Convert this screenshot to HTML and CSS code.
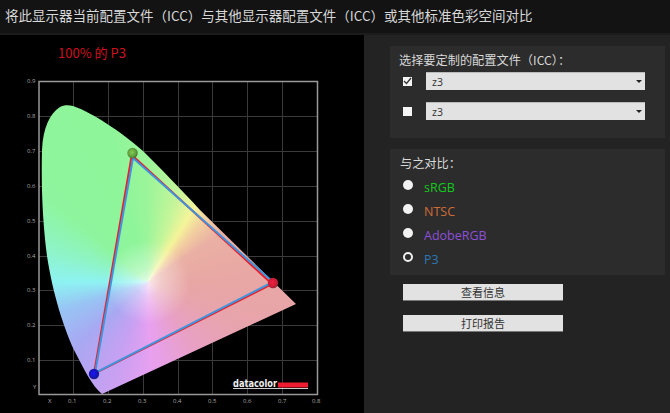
FILE: index.html
```html
<!DOCTYPE html>
<html lang="zh">
<head>
<meta charset="utf-8">
<title>ICC</title>
<link rel="stylesheet" href="styles.css">
</head>
<body>
<header class="top">将此显示器当前配置文件（ICC）与其他显示器配置文件（ICC）或其他标准色彩空间对比</header>
<main class="main">
  <section class="left">
    <div class="cover">100% 的 P3</div>
    <svg class="chart" width="364" height="378" viewBox="0 35 364 378" xmlns="http://www.w3.org/2000/svg">
      <defs>
        <clipPath id="gamut">
          <path d="M102 394 C92 386 84 369 74 350 C64 328 53 295 47 256 C43 225 41 190 42 150 C43 128 50 113 60 107 C64 105 68 105 73 106 C93 113 120 131 143 151 C160 168 180 188 200 210 L296 304 Z"/>
        </clipPath>
        <radialGradient id="ballG" cx="45%" cy="45%" r="60%"><stop offset="0" stop-color="#86cc50"/><stop offset=".7" stop-color="#5c9a3c"/><stop offset="1" stop-color="#3a5a30"/></radialGradient>
        <radialGradient id="ballR" cx="45%" cy="45%" r="60%"><stop offset="0" stop-color="#f02040"/><stop offset=".7" stop-color="#c81c34"/><stop offset="1" stop-color="#70303a"/></radialGradient>
        <radialGradient id="ballB" cx="45%" cy="45%" r="60%"><stop offset="0" stop-color="#1818f8"/><stop offset=".7" stop-color="#1414b0"/><stop offset="1" stop-color="#203070"/></radialGradient>
      </defs>
      <g class="grid">
        <path d="M73.500 81V395M108.500 81V395M143.500 81V395M178.500 81V395M212.500 81V395M247.500 81V395M282.500 81V395M39 116.500H317M39 151.500H317M39 186.500H317M39 221.500H317M39 256.500H317M39 290.500H317M39 325.500H317M39 360.500H317"/>
      </g>
      <rect class="frame" x="39" y="81.500" width="278.500" height="313"/>
      <g class="labels">
        <text x="27" y="83">0.9</text><text x="27" y="118">0.8</text><text x="27" y="153">0.7</text><text x="27" y="188">0.6</text><text x="27" y="223">0.5</text><text x="27" y="258">0.4</text><text x="27" y="292">0.3</text><text x="27" y="327">0.2</text><text x="27" y="362">0.1</text><text x="33" y="389">Y</text>
        <text x="48" y="403">X</text><text x="68" y="403">0.1</text><text x="103" y="403">0.2</text><text x="138" y="403">0.3</text><text x="173" y="403">0.4</text><text x="208" y="403">0.5</text><text x="243" y="403">0.6</text><text x="278" y="403">0.7</text><text x="312" y="403">0.8</text>
      </g>
      <g clip-path="url(#gamut)">
        <foreignObject x="0" y="60" width="364" height="353">
          <div class="spectrum" xmlns="http://www.w3.org/1999/xhtml"></div>
        </foreignObject>
      </g>
      <path class="line-red" d="M131.800 155 L272 284 L94 373.800 Z"/>
      <path class="line-blue" d="M133 158 L273 282 L95 373 Z"/>
      <circle cx="132.500" cy="153" r="5.200" fill="url(#ballG)"/>
      <circle cx="273" cy="283" r="5.200" fill="url(#ballR)"/>
      <circle cx="94" cy="374" r="5.200" fill="url(#ballB)"/>
      <text class="brand" x="233" y="387" textLength="44" lengthAdjust="spacingAndGlyphs">datacolor</text>
      <rect x="278" y="382.500" width="30" height="5" fill="#ee1c2e"/>
      <rect x="233" y="388" width="75" height="1" fill="#ccc"/>
    </svg>
  </section>
  <section class="right">
    <div class="panel panel-profile">
      <div class="panel-title">选择要定制的配置文件（ICC）：</div>
      <div class="profile-row">
        <span class="check">
          <svg width="9" height="8" viewBox="0 0 9 8"><path d="M1 4 L3.500 6.500 L8 1" fill="none" stroke="#333" stroke-width="1.300"/></svg>
        </span>
        <div class="select"><span>z3</span><i class="arrow"></i></div>
      </div>
      <div class="profile-row">
        <span class="check"></span>
        <div class="select"><span>z3</span><i class="arrow"></i></div>
      </div>
    </div>
    <div class="panel panel-compare">
      <div class="panel-title">与之对比：</div>
      <div class="radio-row"><span class="radio"></span><span class="c-srgb">sRGB</span></div>
      <div class="radio-row"><span class="radio"></span><span class="c-ntsc">NTSC</span></div>
      <div class="radio-row"><span class="radio"></span><span class="c-adobe">AdobeRGB</span></div>
      <div class="radio-row"><span class="radio on"></span><span class="c-p3">P3</span></div>
    </div>
    <div class="buttons">
      <div class="btn">查看信息</div>
      <div class="btn">打印报告</div>
    </div>
  </section>
</main>
</body>
</html>
```
FILE: styles.css
```css
* { box-sizing: border-box; }
html, body { margin: 0; height: 413px; overflow: hidden; background: #000; }
body {
  width: 670px;
  font-family: "Noto Sans CJK SC", "Open Sans", "Noto Sans", sans-serif;
  color: #ddd;
  display: flex;
  flex-direction: column;
}
.top {
  height: 35px;
  background: #131313;
  border-bottom: 2px solid #1c1c1c;
  padding: 4px 0 0 5px;
  font-size: 13.500px;
  line-height: 22px;
  color: #d8d8d8;
  white-space: nowrap;
}
.main { display: flex; flex: 1; min-height: 0; }
.left { width: 364px; background: #000; position: relative; }
.cover {
  position: absolute;
  left: 58px;
  top: 9px;
  font-size: 13px;
  line-height: 18px;
  color: #d0101c;
}
.chart { display: block; }
.grid path { stroke: #3a3a3a; stroke-width: 1; fill: none; }
.frame { fill: none; stroke: #999; stroke-width: 1.500; }
.labels text { font: 6px "Open Sans", sans-serif; fill: #aaa; }
.spectrum {
  width: 364px;
  height: 353px;
  background:
    radial-gradient(circle at 148px 222px, rgba(255,255,255,.75) 0, rgba(255,255,255,.4) 14px, rgba(255,255,255,0) 42px),
    conic-gradient(from 0deg at 148px 222px,
      #9cf59a 0deg, #c4f59a 18deg, #f4f49a 32deg, #f2d0a0 42deg, #eab0a4 56deg, #e8a6a4 90deg, #e8a4ac 115deg, #e8a0c4 145deg, #e8a0f0 178deg,
      #c8a0f2 200deg, #a8a8f2 228deg, #98c4f4 252deg, #8ef2f2 270deg, #8ef4c8 288deg, #8ef59e 310deg, #8ef59a 345deg, #9cf59a 360deg);
}
.line-red { fill: none; stroke: #e8202c; stroke-width: 2; }
.line-blue { fill: none; stroke: #3f94dc; stroke-width: 2; }
.brand { font: bold 10.500px "DejaVu Sans", sans-serif; fill: #eee; }
.right { flex: 1; background: #232323; padding: 11px 5px 0 26px; }
.panel { background: #2c2c2c; width: 275px; }
.panel-title { font-size: 12.200px; line-height: 16px; color: #d8d8d8; }
.panel-profile { height: 92px; padding: 6px 20px 0 9px; }
.profile-row { display: flex; align-items: center; height: 18px; margin-top: 12px; }
.panel-title + .profile-row { margin-top: 4px; }
.check {
  width: 9px; height: 9px; margin-left: 4px; margin-right: 14px;
  background: #f4f4f4; display: flex; align-items: center; justify-content: center;
  flex: none;
}
.select {
  width: 219px; height: 18px; background: #e2e2e2;
  border-top: 1px solid #bbb;
  display: flex; align-items: center; justify-content: space-between;
  padding: 0 3px 0 6px;
  font-size: 10.500px; color: #333;
  font-family: "Open Sans", sans-serif;
}
.arrow { width: 0; height: 0; border: 3px solid transparent; border-top: 3.500px solid #222; border-bottom: 0; }
.panel-compare { height: 126px; margin-top: 11px; padding: 6px 0 0 10px; }
.radio-row {
  display: flex; align-items: center; height: 24px;
  font-size: 12.500px; font-family: "Open Sans", sans-serif;
}
.panel-title + .radio-row { margin-top: 4px; }
.radio {
  width: 10px; height: 10px; border-radius: 50%; background: #f2f2f2;
  margin-left: 3px; margin-right: 11px; flex: none; position: relative; top: -2px;
}
.radio.on { background: #2c2c2c; border: 2px solid #eee; }
.c-srgb { color: #14c81c; }
.c-ntsc { color: #cc6c38; }
.c-adobe { color: #8c50d8; }
.c-p3 { color: #2a78b8; }
.buttons { display: flex; flex-direction: column; gap: 14px; margin: 9px 0 0 13px; }
.btn {
  width: 160px; height: 17px; background: #e2e2e2;
  border-bottom: 1px solid #777;
  text-align: center; font-size: 11px; line-height: 16px; color: #333;
}
```
